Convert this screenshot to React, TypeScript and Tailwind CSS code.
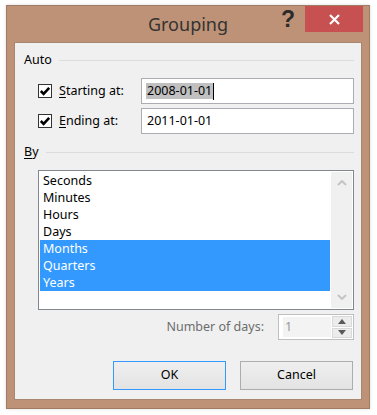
import React from "react";

const items = ["Seconds", "Minutes", "Hours", "Days", "Months", "Quarters", "Years"];

function Check() {
  return (
    <div className="w-[14px] h-[14px] border border-[#333333] bg-white flex items-center justify-center shrink-0">
      <svg width="12" height="12" viewBox="0 0 12 12">
        <path d="M1.8 6 L4.6 8.8 L10.2 2.8" fill="none" stroke="#000" strokeWidth="2.6" />
      </svg>
    </div>
  );
}

export default function App() {
  return (
    <div className="w-[377px] h-[415px] bg-white pt-[5px] pl-[6px] font-['Noto_Sans',sans-serif] text-[12.5px] text-black">
      <div className="w-[364px] h-[404px] bg-[#be9276] border border-[#a07c64] flex flex-col shadow-[0_0_3px_rgba(0,0,0,0.15)]">
        {/* title bar */}
        <div className="h-[36px] grid grid-cols-[1fr_auto_1fr]">
          <div />
          <div className="pt-[6px] text-[18px] leading-[24px] text-[#333333]">Grouping</div>
          <div className="flex justify-end items-start">
            <div className="mt-[2px] mr-[10px] font-['Liberation_Sans',sans-serif] font-bold text-[23px] leading-[23px] text-[#2b2b2b]">
              ?
            </div>
            <div className="w-[58px] h-[26px] mr-[6px] bg-[#c75050] flex items-center justify-center">
              <svg width="11" height="11" viewBox="0 0 11 11">
                <path d="M1 1 L10 10 M10 1 L1 10" stroke="#fff" strokeWidth="2.2" />
              </svg>
            </div>
          </div>
        </div>

        {/* content */}
        <div className="mx-[7px] h-[358px] bg-[#f0f0f0] border border-[#a88670] flex flex-col pl-[9px] pr-[7px]">
          {/* Auto header */}
          <div className="mt-[9px] h-[16px] flex items-center">
            <span className="leading-[16px]">Auto</span>
            <div className="ml-[7px] flex-1 h-px bg-[#dcdcdc]" />
          </div>

          {/* Starting row */}
          <div className="mt-[10px] h-[26px] flex items-center pl-[14px]">
            <Check />
            <span className="ml-[7px]">
              <span className="underline underline-offset-2">S</span>tarting at:
            </span>
            <div className="ml-auto w-[213px] h-[26px] border border-[#abadb3] bg-white flex items-center pl-[4px]">
              <span className="bg-[#c0c0c0] leading-[16px] h-[16px] px-[1px]">2008-01-01</span>
              <span className="w-px h-[17px] bg-black" />
            </div>
          </div>

          {/* Ending row */}
          <div className="mt-[4px] h-[26px] flex items-center pl-[14px]">
            <Check />
            <span className="ml-[7px]">
              <span className="underline underline-offset-2">E</span>nding at:
            </span>
            <div className="ml-auto w-[213px] h-[26px] border border-[#abadb3] bg-white flex items-center pl-[5px]">
              <span className="leading-[16px]">2011-01-01</span>
            </div>
          </div>

          {/* By header */}
          <div className="mt-[10px] h-[16px] flex items-center">
            <span className="leading-[16px]">
              <span className="underline underline-offset-2">B</span>y
            </span>
            <div className="ml-[7px] flex-1 h-px bg-[#dcdcdc]" />
          </div>

          {/* List */}
          <div className="mt-[10px] ml-[14px] h-[140px] border border-[#828790] bg-white p-[1px] flex">
            <div className="flex-1 flex flex-col">
              {items.map((it, i) => (
                <div
                  key={it}
                  className={
                    i >= 4
                      ? "h-[17px] leading-[17px] pl-[3px] bg-[#3399ff] text-white"
                      : "h-[17px] leading-[17px] pl-[3px] text-black"
                  }
                >
                  {it}
                </div>
              ))}
            </div>
            <div className="w-[21px] ml-[1px] bg-[#f0f0f0] flex flex-col items-center justify-between py-[8px]">
              <svg width="10" height="6" viewBox="0 0 10 6">
                <path d="M1 5 L5 1 L9 5" fill="none" stroke="#c2c2c2" strokeWidth="1.8" />
              </svg>
              <svg width="10" height="6" viewBox="0 0 10 6">
                <path d="M1 1 L5 5 L9 1" fill="none" stroke="#c2c2c2" strokeWidth="1.8" />
              </svg>
            </div>
          </div>

          {/* Number of days */}
          <div className="mt-[4px] h-[26px] flex items-center justify-end">
            <span className="text-[#6d6d6d] mr-[14px]">Number of days:</span>
            <div className="w-[76px] h-[26px] border border-[#bfbfbf] bg-white p-[1px] flex">
              <div className="flex-1 bg-[#f3f3f3] my-[1px] ml-[3px] pl-[2px] text-[#9a9a9a] leading-[20px]">1</div>
              <div className="w-[20px] ml-[1px] flex flex-col gap-[1px]">
                <div className="flex-1 bg-[#ececec] border border-[#d9d9d9] flex items-center justify-center">
                  <svg width="8" height="5" viewBox="0 0 8 5">
                    <path d="M0 5 L4 0 L8 5 Z" fill="#5a5a5a" />
                  </svg>
                </div>
                <div className="flex-1 bg-[#ececec] border border-[#d9d9d9] flex items-center justify-center">
                  <svg width="8" height="5" viewBox="0 0 8 5">
                    <path d="M0 0 L4 5 L8 0 Z" fill="#5a5a5a" />
                  </svg>
                </div>
              </div>
            </div>
          </div>

          {/* Buttons */}
          <div className="mt-[21px] h-[29px] flex justify-end gap-[14px] mr-[1px]">
            <div className="w-[113px] h-[29px] border border-[#3399ff] bg-gradient-to-b from-[#efefef] to-[#e3e3e3] flex items-center justify-center">
              OK
            </div>
            <div className="w-[113px] h-[29px] border border-[#adadad] bg-gradient-to-b from-[#efefef] to-[#e3e3e3] flex items-center justify-center">
              Cancel
            </div>
          </div>
        </div>
      </div>
    </div>
  );
}
